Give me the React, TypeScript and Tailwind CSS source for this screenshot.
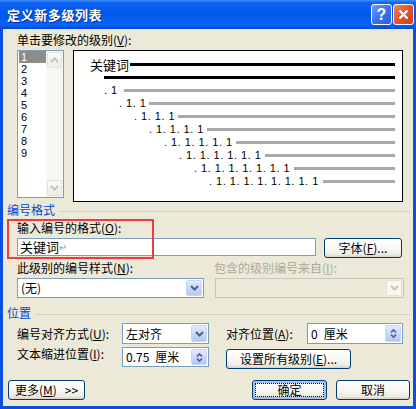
import React from "react";

const BTN =
  "rounded-[3px] border border-[#003C74] bg-[linear-gradient(180deg,#FFFFFF_0%,#F7F6F2_55%,#EDEBE3_85%,#D6D0C5_100%)] flex items-center justify-center text-[12px] leading-[14px] text-black";

function Chevron({ color }: { color: string }) {
  return (
    <svg width="9" height="6" viewBox="0 0 9 6">
      <path d="M1 1 L4.5 4.5 L8 1" fill="none" stroke={color} strokeWidth="2" />
    </svg>
  );
}

function SpinArrows() {
  return (
    <svg width="7" height="11" viewBox="0 0 7 11">
      <path d="M1 4.5 L3.5 2 L6 4.5" fill="none" stroke="#4D6185" strokeWidth="1.6" />
      <path d="M1 6.5 L3.5 9 L6 6.5" fill="none" stroke="#4D6185" strokeWidth="1.6" />
    </svg>
  );
}

function DropBtn() {
  return (
    <div className="w-[16px] h-full rounded-[2px] border border-[#C6D5F8] bg-[linear-gradient(180deg,#E3EBFE_0%,#C9D8FB_50%,#B3C6F5_100%)] flex items-center justify-center">
      <Chevron color="#4D6185" />
    </div>
  );
}

function SpinBtn() {
  return (
    <div className="w-[16px] h-full rounded-[2px] border border-[#C6D5F8] bg-[linear-gradient(180deg,#E3EBFE_0%,#C9D8FB_50%,#B3C6F5_100%)] flex items-center justify-center">
      <SpinArrows />
    </div>
  );
}

function ScrollBtn({ up }: { up?: boolean }) {
  return (
    <div className="w-[15px] h-[16px] rounded-[2px] border border-[#E4E3DA] bg-[linear-gradient(180deg,#FBFBF9,#EEEDE6)] flex items-center justify-center">
      <svg width="9" height="6" viewBox="0 0 9 6">
        <path
          d={up ? "M1 5 L4.5 1.5 L8 5" : "M1 1 L4.5 4.5 L8 1"}
          fill="none"
          stroke="#C6C5BC"
          strokeWidth="2"
        />
      </svg>
    </div>
  );
}

const levels = [
  { pl: "pl-[30px]", w: "w-[20px]", t: ". 1" },
  { pl: "pl-[45px]", w: "w-[30px]", t: ". 1. 1" },
  { pl: "pl-[60px]", w: "w-[44px]", t: ". 1. 1. 1" },
  { pl: "pl-[75px]", w: "w-[58px]", t: ". 1. 1. 1. 1" },
  { pl: "pl-[90px]", w: "w-[72px]", t: ". 1. 1. 1. 1. 1" },
  { pl: "pl-[105px]", w: "w-[86px]", t: ". 1. 1. 1. 1. 1. 1" },
  { pl: "pl-[120px]", w: "w-[100px]", t: ". 1. 1. 1. 1. 1. 1. 1" },
  { pl: "pl-[135px]", w: "w-[114px]", t: ". 1. 1. 1. 1. 1. 1. 1. 1" },
];

export default function App() {
  return (
    <div className="w-[416px] h-[409px] flex flex-col overflow-hidden bg-[#0A4FDF] text-black text-[12px] font-['Noto_Sans_CJK_SC','Liberation_Sans',sans-serif]">
      {/* Title bar */}
      <div className="h-[29px] shrink-0 flex items-center pl-[7px] pr-[2px] bg-[linear-gradient(180deg,#3D8EFB_0%,#0F62F2_10%,#0058EA_45%,#0A62F6_85%,#0049D8_100%)]">
        <span className="text-white font-bold text-[13px] leading-[14px] tracking-[0.6px] [text-shadow:1px_1px_0_#0B2C8C]">
          定义新多级列表
        </span>
        <div className="ml-auto flex items-center gap-[1px]">
          <div className="w-[21px] h-[21px] rounded-[3px] border border-white bg-[linear-gradient(135deg,#6AA0FA_0%,#3B72EE_50%,#2A5CE0_100%)] flex items-center justify-center text-white font-bold text-[16px] leading-none font-['Liberation_Sans',sans-serif]">
            ?
          </div>
          <div className="w-[21px] h-[21px] rounded-[3px] border border-white bg-[linear-gradient(135deg,#F0866A_0%,#E0532E_50%,#C9401C_100%)] flex items-center justify-center">
            <svg width="11" height="11" viewBox="0 0 11 11">
              <path d="M1.5 1.5 L9.5 9.5 M9.5 1.5 L1.5 9.5" stroke="white" strokeWidth="2.2" />
            </svg>
          </div>
        </div>
      </div>

      {/* Body */}
      <div className="flex-1 mx-[3px] mb-[3px] bg-[#ECE9D8] relative flex flex-col">
        <div className="mt-[4px] pl-[14px] h-[14px] leading-[14px]">
          单击要修改的级别(<u className="underline-offset-1">V</u>):
        </div>

        <div className="mt-[3px] pl-[14px] flex items-start">
          {/* Listbox */}
          <div className="w-[47px] h-[148px] border border-[#7F9DB9] bg-white flex">
            <div className="w-[27px] ml-[1px] flex flex-col font-['Liberation_Sans',sans-serif] text-[11px]">
              {["1", "2", "3", "4", "5", "6", "7", "8", "9"].map((n, i) => (
                <div
                  key={n}
                  className={
                    i === 0
                      ? "h-[12px] leading-[12px] pl-[2px] bg-[#8C8C8C] text-white"
                      : "h-[12px] leading-[12px] pl-[2px]"
                  }
                >
                  {n}
                </div>
              ))}
            </div>
            <div className="ml-auto w-[17px] h-full bg-[#F8F7F2] flex flex-col justify-between p-[1px]">
              <ScrollBtn up />
              <ScrollBtn />
            </div>
          </div>

          {/* Preview */}
          <div className="ml-[9px] w-[330px] h-[152px] border border-black bg-white flex flex-col pt-[7px]">
            <div className="h-[13px] flex items-center pl-[16px] pr-[7px]">
              <span className="w-[40px] text-[13px] leading-[13px] whitespace-nowrap">关键词</span>
              <div className="flex-1 h-[3px] bg-black" />
            </div>
            <div className="h-[13px] flex items-center pl-[30px] pr-[7px]">
              <div className="flex-1 h-[3px] bg-black" />
            </div>
            {levels.map((l) => (
              <div key={l.t} className={`h-[13px] flex items-center pr-[7px] ${l.pl}`}>
                <span
                  className={`${l.w} shrink-0 whitespace-nowrap text-[11px] leading-[13px] tracking-[0.5px] font-['Liberation_Sans',sans-serif]`}
                >
                  {l.t}
                </span>
                <div className="flex-1 h-[3px] bg-[#A9A9A9]" />
              </div>
            ))}
          </div>
        </div>

        {/* 编号格式 heading */}
        <div className="mt-[1px] h-[14px] flex items-center pl-[4px] pr-[3px]">
          <span className="text-[#0046D5] leading-[14px]">编号格式</span>
          <div className="flex-1 h-px bg-[#D0D0BF] ml-[4px] mt-[2px]" />
        </div>

        <div className="mt-[4px] pl-[14px] h-[14px] leading-[14px]">
          输入编号的格式(<u className="underline-offset-1">O</u>):
        </div>

        <div className="mt-[3px] pl-[14px] flex items-start">
          <div className="w-[299px] h-[18px] border border-[#7F9DB9] bg-white flex items-center pl-[2px]">
            <span className="text-[13px] leading-[16px]">关键词</span>
            <span className="text-[10px] leading-[16px] text-[#9A9A9A]">↵</span>
          </div>
          <div className={`${BTN} ml-[8px] w-[78px] h-[20px]`}>
            字体(<u className="underline-offset-1">F</u>)...
          </div>
        </div>

        <div className="mt-[3px] pl-[14px] h-[14px] leading-[14px] flex">
          <span className="w-[197px]">
            此级别的编号样式(<u className="underline-offset-1">N</u>):
          </span>
          <span className="text-[#ACA899]">
            包含的级别编号来自(<u className="underline-offset-1">I</u>):
          </span>
        </div>

        <div className="mt-[3px] pl-[14px] flex">
          <div className="w-[187px] h-[20px] border border-[#7F9DB9] bg-white flex items-center p-[1px]">
            <span className="flex-1 pl-[2px] leading-[14px]">(无)</span>
            <DropBtn />
          </div>
          <div className="ml-[11px] w-[189px] h-[20px] border border-[#C9C7BA] flex justify-end p-[1px]">
            <div className="w-[16px] h-full rounded-[2px] border border-[#E3E2DA] bg-[#F7F7F4] flex items-center justify-center">
              <Chevron color="#C9C7BA" />
            </div>
          </div>
        </div>

        {/* 位置 heading */}
        <div className="mt-[8px] h-[14px] flex items-center pl-[4px] pr-[3px]">
          <span className="text-[#0046D5] leading-[14px]">位置</span>
          <div className="flex-1 h-px bg-[#D0D0BF] ml-[4px] mt-[2px]" />
        </div>

        <div className="mt-[3px] pl-[14px] flex items-center h-[21px]">
          <span className="w-[105px] leading-[14px]">
            编号对齐方式(<u className="underline-offset-1">U</u>):
          </span>
          <div className="w-[87px] h-[21px] border border-[#7F9DB9] bg-white flex items-center p-[1px]">
            <span className="flex-1 pl-[2px] leading-[14px]">左对齐</span>
            <DropBtn />
          </div>
          <span className="ml-[17px] w-[81px] leading-[14px]">
            对齐位置(<u className="underline-offset-1">A</u>):
          </span>
          <div className="w-[96px] h-[21px] border border-[#7F9DB9] bg-white flex items-center p-[1px]">
            <span className="flex-1 pl-[2px] leading-[14px]">
              0<span className="ml-[6px]">厘米</span>
            </span>
            <SpinBtn />
          </div>
        </div>

        <div className="mt-[3px] pl-[14px] flex items-start">
          <span className="w-[105px] leading-[14px]">
            文本缩进位置(<u className="underline-offset-1">I</u>):
          </span>
          <div className="w-[87px] h-[20px] border border-[#7F9DB9] bg-white flex items-center p-[1px]">
            <span className="flex-1 pl-[2px] leading-[14px] whitespace-nowrap">
              0.75<span className="ml-[6px]">厘米</span>
            </span>
            <SpinBtn />
          </div>
          <div className={`${BTN} ml-[17px] mt-[2px] w-[125px] h-[20px]`}>
            设置所有级别(<u className="underline-offset-1">E</u>)...
          </div>
        </div>

        <div className="mt-[11px] flex pl-[5px] pr-[3px]">
          <div className={`${BTN} w-[77px] h-[20px]`}>
            更多(<u className="underline-offset-1">M</u>)<span className="ml-[8px]">&gt;&gt;</span>
          </div>
          <div
            className={`${BTN} ml-auto w-[75px] h-[20px] shadow-[inset_0_0_0_2px_#A9C1EE] outline-1 outline-dotted outline-black outline-offset-[-4px]`}
          >
            确定
          </div>
          <div className={`${BTN} ml-[9px] w-[74px] h-[20px]`}>取消</div>
        </div>

        {/* Red annotation rectangle */}
        <div className="absolute left-[4px] top-[190px] w-[147px] h-[40px] border-2 border-[#EE3B3B] pointer-events-none" />
      </div>
    </div>
  );
}
